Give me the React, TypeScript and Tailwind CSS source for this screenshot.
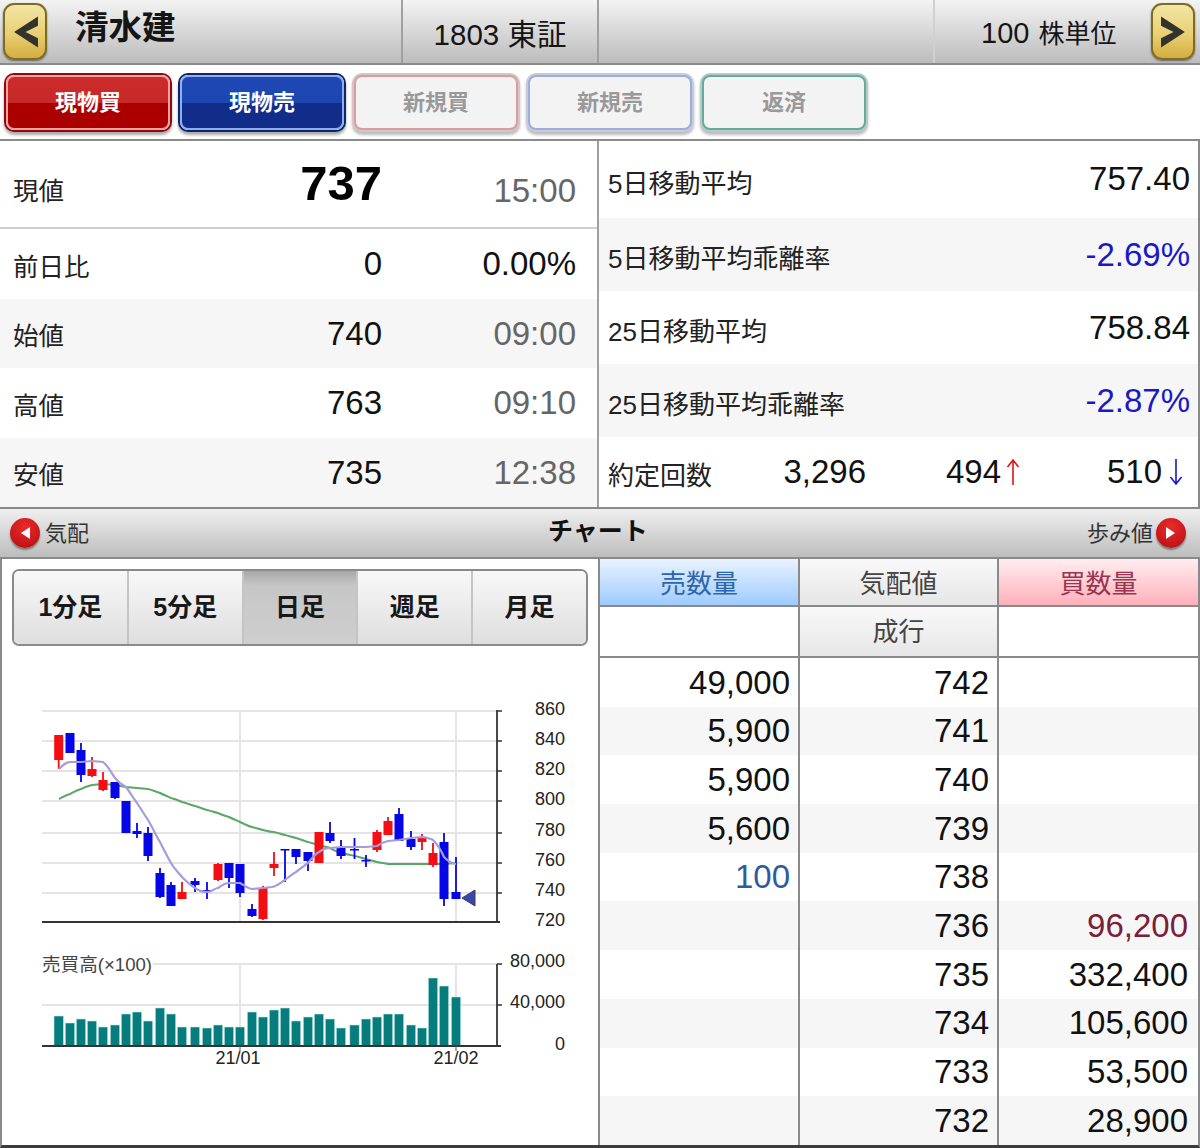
const NUM_FONT = "[font-family:'Liberation_Sans','Noto_Sans_CJK_JP',sans-serif]";

// x, bodyTop, bodyBottom, wickTop, wickBottom, isUp
const candles: [number, number, number, number, number, boolean][] = [
  [58.7, 735, 760, 735, 769, true],
  [70, 733, 753, 733, 753, false],
  [81, 750, 775, 743, 782, false],
  [92, 769, 776, 757, 777, true],
  [103, 780, 790, 772, 791, true],
  [115, 782, 798, 782, 799, false],
  [126, 801, 833, 801, 833, false],
  [137, 831, 834, 823, 838, false],
  [148, 833, 856, 827, 861, false],
  [160, 873, 897, 868, 898, false],
  [171, 885, 906, 882, 906, false],
  [182, 892, 899, 882, 899, true],
  [195, 881, 885, 878, 892, false],
  [207, 890, 892, 882, 899, false],
  [218, 864, 880, 863, 881, true],
  [229, 863, 878, 863, 888, false],
  [240, 864, 893, 864, 897, false],
  [252, 909, 916, 904, 917, false],
  [263, 888, 919, 886, 920, true],
  [274, 864, 868, 852, 876, true],
  [285, 849, 850.5, 849, 882, false],
  [296, 849, 857, 849, 864, false],
  [308, 852, 861, 852, 871, false],
  [319, 832, 863, 832, 863, true],
  [330, 833, 841, 822, 843, false],
  [341, 848, 856, 840, 859, false],
  [354.5, 849, 850.5, 838, 859, false],
  [366, 860, 861.5, 855, 867, false],
  [377, 832, 850, 830, 852, true],
  [388, 821, 835, 817, 835, true],
  [399, 814, 841, 808, 841, false],
  [411, 839, 847, 831, 850, false],
  [422, 838, 842, 834, 850, true],
  [433, 853, 865, 843, 867, true],
  [444, 842, 899, 833, 906, false],
  [456, 892, 899, 857, 899, false],
];

const volumeTops = [
  1016, 1023, 1019, 1021, 1027, 1025, 1014, 1012, 1021, 1008, 1014, 1027, 1027, 1028, 1025, 1027, 1027, 1012,
  1017, 1010, 1008, 1021, 1017, 1014, 1019, 1028, 1025, 1019, 1017, 1014, 1014, 1025, 1028, 978, 986, 997,
];

const maShort =
  "M59 769 C63 765 66 762 70 762 L81 762 L92 761 L103 762 C108 766 111 772 115 778 C119 783 122 785 126 787 C130 792 133 798 137 803 C141 809 144 814 148 820 C153 828 156 836 160 842 C164 850 167 856 171 863 C175 870 178 872 182 877 C187 882 190 885 195 888 C199 891 203 892 207 892 C212 892 215 888 218 888 C222 885 225 883 229 883 C233 883 236 883 240 883 C244 885 248 889 252 889 L263 888 L272 887 C278 886 281 882 285 880 C289 877 292 874 296 872 C300 869 304 866 308 863 C312 858 315 854 319 852 C323 849 326 848 330 848 L341 847 L355 847 L366 847 L377 846 C381 843 384 842 388 841 L399 840 L411 838 L422 837 C427 837 430 839 433 840 C438 845 441 850 444 857 C449 862 452 864 456 864";

const maLong =
  "M59 799 C63 797 66 795 70 794 C74 792 77 790 81 789 C85 787 88 786 92 785 L103 784 L115 785 L126 787 L137 788 L148 789 C153 790 156 792 160 793 C164 795 167 796 171 798 C175 799 178 800 182 802 C187 803 190 805 195 806 C199 807 203 809 207 810 C211 811 214 812 218 813 C222 815 225 816 229 817 C233 819 236 820 240 822 C244 824 248 826 252 827 C256 828 259 829 263 830 C267 831 270 832 274 832 C278 833 281 834 285 835 C289 836 292 837 296 838 C300 839 304 841 308 842 C312 843 315 844 319 845 C323 846 326 847 330 848 C334 850 337 852 341 853 C345 854 351 855 355 856 C359 857 362 858 366 859 C370 860 373 861 377 862 C381 863 384 863 388 864 L399 864 L411 864 L422 864 L433 864 L444 864 L456 863";

function Candles() {
  return (
    <svg viewBox="0 650 598 494" className={`block h-[494px] w-[598px] ${NUM_FONT}`}>
      {[711, 741, 771, 801, 833, 863, 893].map((y) => (
        <line key={y} x1={42} x2={497} y1={y} y2={y} stroke="#e4e4e4" strokeWidth={2} />
      ))}
      <line x1={240} x2={240} y1={711} y2={922} stroke="#e4e4e4" strokeWidth={2} />
      <line x1={456} x2={456} y1={711} y2={922} stroke="#e4e4e4" strokeWidth={2} />
      <path d={maLong} fill="none" stroke="#5aa868" strokeWidth={2} />
      {candles.map(([x, top, bottom, wickTop, wickBottom, up]) => {
        const color = up ? "#f40d12" : "#0505e6";
        return (
          <g key={x}>
            <line x1={x} x2={x} y1={wickTop} y2={wickBottom} stroke={color} strokeWidth={1.8} />
            <rect x={x - 4.5} y={top} width={9} height={bottom - top} fill={color} />
          </g>
        );
      })}
      <path d={maShort} fill="none" stroke="#a49cdc" strokeWidth={2.2} />
      <path d="M462 898 L475 890 L475 906 Z" fill="#3a46ad" stroke="#3b3f5c" strokeWidth={1} />
      <line x1={42} x2={500} y1={922} y2={922} stroke="#333" strokeWidth={1.8} />
      <line x1={497} x2={497} y1={710} y2={922} stroke="#333" strokeWidth={1.8} />
      {[711, 741, 771, 801, 833, 863, 893].map((y) => (
        <line key={y} x1={497} x2={502} y1={y} y2={y} stroke="#333" strokeWidth={1.5} />
      ))}
      {[
        ["860", 715],
        ["840", 745],
        ["820", 775],
        ["800", 805],
        ["780", 836],
        ["760", 866],
        ["740", 896],
        ["720", 926],
      ].map(([label, y]) => (
        <text key={label} x={565} y={y} textAnchor="end" fontSize={18} fill="#222">
          {label}
        </text>
      ))}

      <line x1={153} x2={497} y1={964} y2={964} stroke="#e4e4e4" strokeWidth={2} />
      <text x={42} y={971} fontSize={18.6} fill="#444">
        売買高(×100)
      </text>
      <line x1={42} x2={497} y1={1005} y2={1005} stroke="#e4e4e4" strokeWidth={2} />
      <line x1={240} x2={240} y1={964} y2={1046} stroke="#e4e4e4" strokeWidth={2} />
      <line x1={456} x2={456} y1={964} y2={1046} stroke="#e4e4e4" strokeWidth={2} />
      {volumeTops.map((top, i) => (
        <rect
          key={i}
          x={candles[i][0] - 4.7}
          y={top}
          width={9.4}
          height={1046 - top}
          fill="#067c7c"
          stroke="#b8e6e6"
          strokeWidth={0.6}
        />
      ))}
      <line x1={42} x2={501} y1={1046} y2={1046} stroke="#333" strokeWidth={1.8} />
      <line x1={497} x2={497} y1={964} y2={1046} stroke="#333" strokeWidth={1.8} />
      <line x1={497} x2={502} y1={964} y2={964} stroke="#333" strokeWidth={1.5} />
      <line x1={497} x2={502} y1={1005} y2={1005} stroke="#333" strokeWidth={1.5} />
      <line x1={240} x2={240} y1={1046} y2={1051} stroke="#555" strokeWidth={1} />
      <line x1={456} x2={456} y1={1046} y2={1051} stroke="#555" strokeWidth={1} />
      {[
        ["80,000", 967],
        ["40,000", 1008],
        ["0", 1050],
      ].map(([label, y]) => (
        <text key={label} x={565} y={y} textAnchor="end" fontSize={18} fill="#222">
          {label}
        </text>
      ))}
      <text x={238} y={1064} textAnchor="middle" fontSize={18} fill="#222">
        21/01
      </text>
      <text x={456} y={1064} textAnchor="middle" fontSize={18} fill="#222">
        21/02
      </text>
    </svg>
  );
}

function GoldButton({ side }: { side: "left" | "right" }) {
  return (
    <button className="flex h-[57px] w-[44px] items-center justify-center rounded-[11px] border-2 border-[#7f6c22] bg-[linear-gradient(#f1e6a6,#e9cf74_55%,#d4ad3e)] shadow-[0_1px_2px_#0007]">
      <svg viewBox="0 0 26 34" className="h-[36px] w-[27px]">
        <path
          d={side === "left" ? "M25 2 L2 17 L25 32 L25 23 L13 17 L25 11 Z" : "M1 2 L24 17 L1 32 L1 23 L13 17 L1 11 Z"}
          fill="#33332d"
        />
      </svg>
    </button>
  );
}

function RedDot({ side }: { side: "left" | "right" }) {
  return (
    <span className="flex h-[30px] w-[30px] items-center justify-center rounded-full bg-[radial-gradient(circle_at_50%_30%,#ec2a2a,#b30d12)] shadow-[0_2px_2px_#0006]">
      <svg viewBox="0 0 12 14" className="h-[14px] w-[12px]">
        <path d={side === "left" ? "M11 1 L2 7 L11 13 Z" : "M1 1 L10 7 L1 13 Z"} fill="#fff" />
      </svg>
    </span>
  );
}

function InfoRow({
  label,
  value,
  time,
  shaded,
  dark,
}: {
  label: string;
  value: string;
  time: string;
  shaded?: boolean;
  dark?: boolean;
}) {
  return (
    <div className={`flex h-[69.5px] items-center pl-[13px] pr-[21px] ${shaded ? "bg-[#f6f6f6]" : ""}`}>
      <span className="pt-[6px] text-[25.5px] text-[#222]">{label}</span>
      <span className="ml-auto text-[33px] text-[#111]">{value}</span>
      <span className={`w-[194px] text-right text-[33px] ${dark ? "text-[#111]" : "text-[#666]"}`}>{time}</span>
    </div>
  );
}

function AvgRow({ label, value, blue, shaded }: { label: string; value: string; blue?: boolean; shaded?: boolean }) {
  return (
    <div className={`flex h-[73px] items-center justify-between pl-[9px] pr-[8px] ${shaded ? "bg-[#f6f6f6]" : ""}`}>
      <span className="pt-[9px] text-[26px] text-[#222]">{label}</span>
      <span className={`text-[33px] ${blue ? "text-[#1a1ac4]" : "text-[#111]"}`}>{value}</span>
    </div>
  );
}

const orderRows = [
  ["49,000", "742", ""],
  ["5,900", "741", ""],
  ["5,900", "740", ""],
  ["5,600", "739", ""],
  ["100", "738", ""],
  ["", "736", "96,200"],
  ["", "735", "332,400"],
  ["", "734", "105,600"],
  ["", "733", "53,500"],
  ["", "732", "28,900"],
];

export default function App() {
  return (
    <div className={`flex h-[1148px] w-[1200px] flex-col overflow-hidden bg-white ${NUM_FONT}`}>
      {/* top bar */}
      <div className="flex h-[65px] shrink-0 border-b-2 border-[#8a8a8a] bg-[linear-gradient(#f3f3f3,#bcbcbc)]">
        <div className="flex w-[401px] items-center pl-[3px]">
          <GoldButton side="left" />
          <span className="ml-[28px] pb-[6px] text-[33.5px] font-bold text-[#151515]">清水建</span>
        </div>
        <div className="flex w-[196px] items-center justify-center border-l-2 border-[#a0a0a0] pt-[7px] text-[29.5px] text-[#151515]">
          1803 東証
        </div>
        <div className="w-[336px] border-l-2 border-[#a0a0a0]" />
        <div className="flex flex-1 items-center border-l-2 border-[#d0d0d0] pl-[46px] text-[#151515]">
          <span className="pt-[5px] text-[29px]">100</span>
          <span className="ml-[9px] pt-[5px] text-[26px]">株単位</span>
          <span className="ml-auto mr-[5px]">
            <GoldButton side="right" />
          </span>
        </div>
      </div>

      {/* order type buttons */}
      <div className="flex h-[76px] shrink-0 items-start gap-[10px] border-b-2 border-[#8a8a8a] pl-[6px] pt-[10px]">
        <button className="h-[55px] w-[164px] rounded-[8px] border-2 border-[#f2a0a0] bg-[linear-gradient(#cc2b2b_0%,#c72828_50%,#aa0000_50%,#aa0000_100%)] text-[22px] font-bold text-white shadow-[0_0_0_2px_#8c0a10,0_3px_3px_2px_#0005]">
          現物買
        </button>
        <button className="h-[55px] w-[164px] rounded-[8px] border-2 border-[#8fb0f0] bg-[linear-gradient(#1f48b4_0%,#1c46b0_50%,#122c8a_50%,#122c8a_100%)] text-[22px] font-bold text-white shadow-[0_0_0_2px_#0e2566,0_3px_3px_2px_#0005]">
          現物売
        </button>
        <button className="h-[55px] w-[164px] rounded-[8px] border-2 border-[#e09a9a] bg-[#f3f3f3] text-[22px] font-bold text-[#999] shadow-[0_0_0_2px_#cfc8c8,0_3px_3px_2px_#0004]">
          新規買
        </button>
        <button className="h-[55px] w-[164px] rounded-[8px] border-2 border-[#9aaee0] bg-[#f3f3f3] text-[22px] font-bold text-[#999] shadow-[0_0_0_2px_#c8ccd8,0_3px_3px_2px_#0004]">
          新規売
        </button>
        <button className="h-[55px] w-[164px] rounded-[8px] border-2 border-[#5fae9c] bg-[#f3f3f3] text-[22px] font-bold text-[#999] shadow-[0_0_0_2px_#bcc8c4,0_3px_3px_2px_#0004]">
          返済
        </button>
      </div>

      {/* quote */}
      <div className="flex h-[366px] shrink-0 border-r-2 border-[#8a8a8a]">
        <div className="w-[599px] border-r-2 border-[#a0a0a0]">
          <div className="flex h-[88px] items-center border-b-2 border-[#d0d0d0] pl-[13px] pr-[21px]">
            <span className="pt-[14px] text-[25.5px] text-[#222]">現値</span>
            <span className="ml-auto text-[49px] font-bold text-black">737</span>
            <span className="w-[194px] pt-[14px] text-right text-[33px] text-[#666]">15:00</span>
          </div>
          <InfoRow label="前日比" value="0" time="0.00%" dark />
          <InfoRow label="始値" value="740" time="09:00" shaded />
          <InfoRow label="高値" value="763" time="09:10" />
          <InfoRow label="安値" value="735" time="12:38" shaded />
        </div>
        <div className="flex-1">
          <div className="flex h-[77px] items-center justify-between pl-[9px] pr-[8px]">
            <span className="pt-[9px] text-[26px] text-[#222]">5日移動平均</span>
            <span className="pb-[2px] text-[33px] text-[#111]">757.40</span>
          </div>
          <AvgRow label="5日移動平均乖離率" value="-2.69%" blue shaded />
          <AvgRow label="25日移動平均" value="758.84" />
          <AvgRow label="25日移動平均乖離率" value="-2.87%" blue shaded />
          <div className="flex h-[70px] items-center pl-[9px] text-[33px] text-[#111]">
            <span className="w-[105px] pt-[9px] text-[26px] text-[#222]">約定回数</span>
            <span className="w-[153px] text-right">3,296</span>
            <span className="w-[135px] text-right">494</span>
            <svg viewBox="0 0 16 28" className="ml-[4px] h-[28px] w-[16px]">
              <path d="M8 27 L8 2 M2.5 9 L8 2 L13.5 9" fill="none" stroke="#e01414" strokeWidth={1.6} />
            </svg>
            <span className="w-[141px] text-right">510</span>
            <svg viewBox="0 0 16 28" className="ml-[6px] h-[28px] w-[16px]">
              <path d="M8 1 L8 26 M2.5 19 L8 26 L13.5 19" fill="none" stroke="#1a1ac4" strokeWidth={1.6} />
            </svg>
          </div>
        </div>
      </div>

      {/* section bar */}
      <div className="flex h-[52px] shrink-0 items-center border-y-2 border-[#8a8a8a] bg-[linear-gradient(#efefef,#bdbdbd)] pl-[10px] pr-[14px]">
        <RedDot side="left" />
        <span className="ml-[5px] w-[503px] text-[22px] text-[#333]">気配</span>
        <span className="pb-[3px] text-[25px] font-bold text-[#111]">チャート</span>
        <span className="ml-auto mr-[3px] text-[22px] text-[#333]">歩み値</span>
        <RedDot side="right" />
      </div>

      {/* chart and board */}
      <div className="flex min-h-0 flex-1 border-x-2 border-b-[3px] border-x-[#8a8a8a] border-b-[#3c3c3c]">
        <div className="w-[598px] border-r-2 border-[#8a8a8a]">
          <div className="mx-[10px] mt-[10px] flex h-[77px] w-[576px] overflow-hidden rounded-[7px] border-2 border-[#8a8a8a] text-[25px] font-bold text-[#181818]">
            {["1分足", "5分足", "日足", "週足", "月足"].map((tab) => (
              <div
                key={tab}
                className={`flex flex-1 items-center justify-center border-r-2 border-[#c4c4c4] last:border-r-0 ${
                  tab === "日足"
                    ? "bg-[linear-gradient(#a8a8a8,#c6c6c6_20%,#cfcfcf)]"
                    : "bg-[linear-gradient(#f8f8f8,#dedede)]"
                }`}
              >
                {tab}
              </div>
            ))}
          </div>
          <div className="-ml-[2px] mt-[4px]">
            <Candles />
          </div>
        </div>
        <div className="flex-1">
          <div className="grid grid-cols-[200px_199px_1fr] border-b-2 border-[#8a8a8a] text-[26px]">
            <div className="flex h-[48px] items-center justify-center border-r-2 border-b-2 border-[#8a8a8a] bg-[linear-gradient(#eaf3ff,#9ecbff)] pt-[4px] text-[#2d66ab]">
              売数量
            </div>
            <div className="flex h-[48px] items-center justify-center border-r-2 border-b-2 border-[#8a8a8a] bg-[linear-gradient(#f9f9f9,#e6e6e6)] pt-[4px] text-[#444]">
              気配値
            </div>
            <div className="flex h-[48px] items-center justify-center border-b-2 border-[#8a8a8a] bg-[linear-gradient(#ffeef0,#ffb0ba)] pt-[4px] text-[#9a3550]">
              買数量
            </div>
            <div className="h-[49px] border-r-2 border-[#8a8a8a]" />
            <div className="flex h-[49px] items-center justify-center border-r-2 border-[#8a8a8a] bg-[linear-gradient(#f9f9f9,#e6e6e6)] pt-[2px] text-[#444]">
              成行
            </div>
            <div className="h-[49px]" />
          </div>
          <div className="grid auto-rows-[48.7px] grid-cols-[200px_199px_1fr] text-[33px] text-[#111]">
            {orderRows.map(([sell, price, buy], i) => {
              const shade = i % 2 === 1 ? "bg-[#f6f6f6]" : "";
              return (
                <div key={price} className="contents">
                  <div className={`flex items-center justify-end border-r-2 border-[#8a8a8a] pr-[8px] ${shade} ${sell === "100" ? "text-[#2f5b9e]" : ""}`}>
                    {sell}
                  </div>
                  <div className={`flex items-center justify-end border-r-2 border-[#8a8a8a] pr-[8px] ${shade}`}>{price}</div>
                  <div className={`flex items-center justify-end pr-[10px] ${shade} ${buy === "96,200" ? "text-[#7a2038]" : ""}`}>
                    {buy}
                  </div>
                </div>
              );
            })}
          </div>
        </div>
      </div>
    </div>
  );
}
